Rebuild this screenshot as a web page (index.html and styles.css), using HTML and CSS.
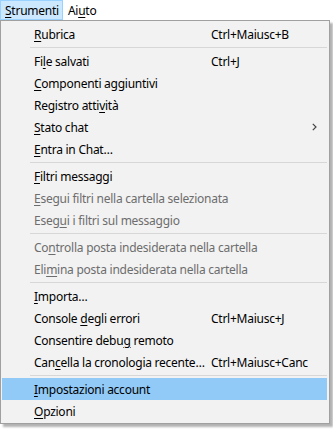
FILE: index.html
```html
<!DOCTYPE html>
<html lang="it">
<head>
<meta charset="utf-8">
<link rel="stylesheet" href="styles.css">
</head>
<body>
<div class="menubar">
  <div class="mb-item active"><u>S</u>trumenti</div>
  <div class="mb-item">Ai<u>u</u>to</div>
</div>
<div class="popup">
  <div class="item"><span class="label"><u>R</u>ubrica</span><span class="key">Ctrl+Maiusc+B</span></div>
  <div class="sep"></div>
  <div class="item"><span class="label">Fi<u>l</u>e salvati</span><span class="key">Ctrl+J</span></div>
  <div class="item"><span class="label"><u>C</u>omponenti aggiuntivi</span></div>
  <div class="item"><span class="label">Registro atti<u>v</u>ità</span></div>
  <div class="item"><span class="label"><u>S</u>tato chat</span><svg class="arrow" width="5" height="8" viewBox="0 0 5 8"><polyline points="0.8,0.8 4,4 0.8,7.2" fill="none" stroke="#444" stroke-width="1.2"/></svg></div>
  <div class="item"><span class="label"><u>E</u>ntra in Chat…</span></div>
  <div class="sep"></div>
  <div class="item"><span class="label"><u>F</u>iltri messaggi</span></div>
  <div class="item disabled"><span class="label"><u>E</u>segui filtri nella cartella selezionata</span></div>
  <div class="item disabled"><span class="label">Eseg<u>u</u>i i filtri sul messaggio</span></div>
  <div class="sep"></div>
  <div class="item disabled"><span class="label">Co<u>n</u>trolla posta indesiderata nella cartella</span></div>
  <div class="item disabled"><span class="label">Eli<u>m</u>ina posta indesiderata nella cartella</span></div>
  <div class="sep"></div>
  <div class="item"><span class="label"><u>I</u>mporta…</span></div>
  <div class="item"><span class="label">Console <u>d</u>egli errori</span><span class="key">Ctrl+Maiusc+J</span></div>
  <div class="item"><span class="label">Consentire debu<u>g</u> remoto</span></div>
  <div class="item"><span class="label">Can<u>c</u>ella la cronologia recente…</span><span class="key">Ctrl+Maiusc+Canc</span></div>
  <div class="sep"></div>
  <div class="item hover"><span class="label"><u>I</u>mpostazioni account</span></div>
  <div class="item"><span class="label"><u>O</u>pzioni</span></div>
</div>
</body>
</html>
```
FILE: styles.css
```css
html, body {
  margin: 0;
  padding: 0;
  background: #ffffff;
}
body {
  font-family: "Noto Sans", "Open Sans", sans-serif;
  font-size: 12px;
  letter-spacing: -0.25px;
  color: #000;
  width: 333px;
  height: 429px;
  overflow: hidden;
}
u {
  text-decoration: underline;
  text-underline-offset: 2px;
  text-decoration-thickness: 1px;
}
.menubar {
  display: flex;
  height: 20px;
  background: #fff;
}
.mb-item {
  height: 20px;
  line-height: 19px;
  padding: 0 6px 0 5px;
  box-sizing: border-box;
  border: 1px solid transparent;
  border-left-width: 0;
}
.mb-item.active {
  background: #cce8ff;
  border: 1px solid #99d1ff;
  padding: 0 3px 0 4px;
}
.popup {
  width: 330px;
  box-sizing: border-box;
  background: #f2f2f2;
  border: 1px solid #a0a0a0;
  padding: 2px 2px 1px 1px;
  box-shadow: 3px 3px 2px rgba(0, 0, 0, 0.3);
}
.item {
  display: flex;
  align-items: center;
  height: 22px;
  padding-left: 32px;
  white-space: nowrap;
}
.item .label {
  width: 177px;
  flex: none;
  overflow: visible;
}
.item .key {
  flex: none;
}
.item .arrow {
  margin-left: auto;
  margin-right: 10px;
}
.item.disabled {
  color: #6d6d6d;
}
.item.hover {
  background: #91c9f7;
}
.sep {
  height: 1px;
  margin: 2px 0 2px 28px;
  background: #d7d7d7;
}
```
